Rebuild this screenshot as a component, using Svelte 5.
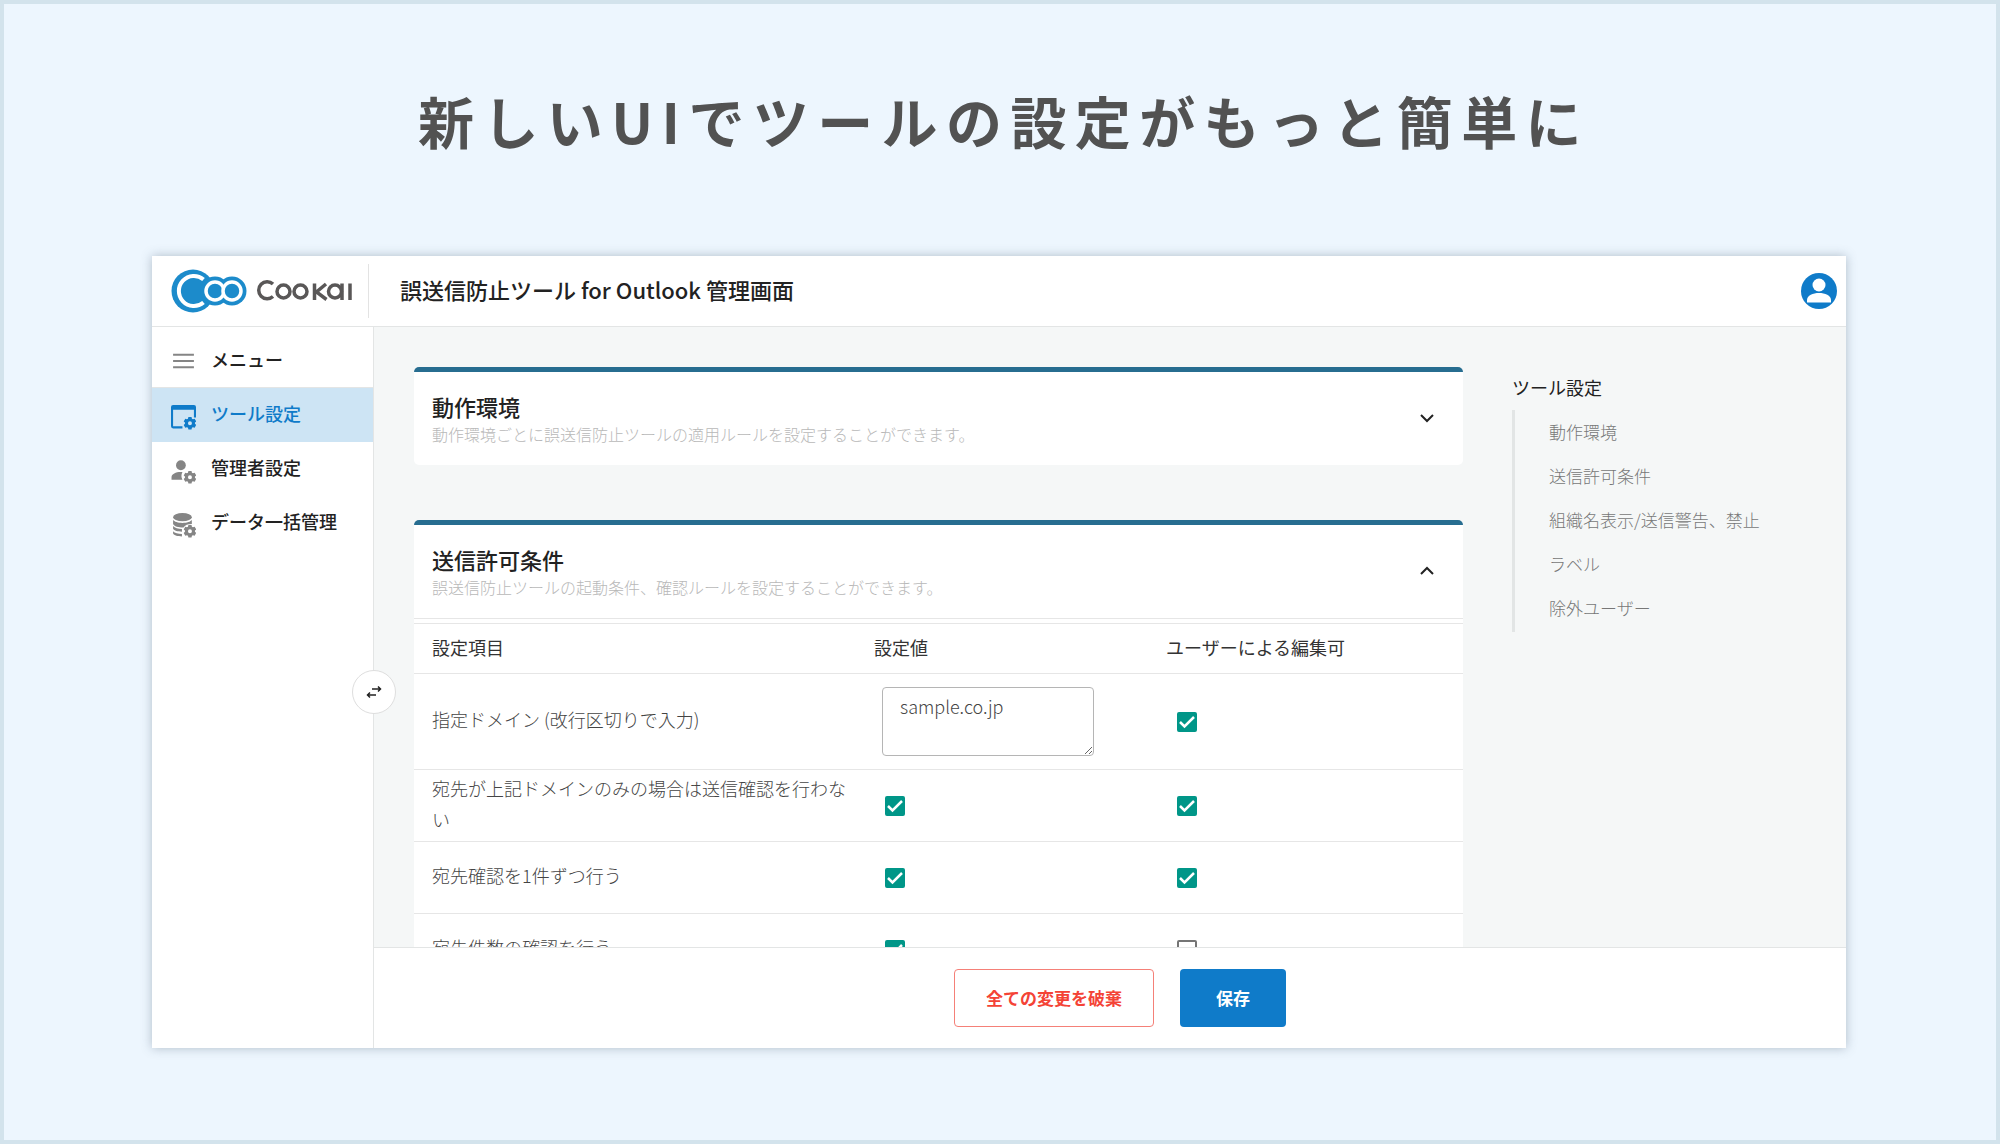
<script>
  const menu = [
    { icon: 'tool', label: 'ツール設定', active: true },
    { icon: 'admin', label: '管理者設定', active: false },
    { icon: 'data', label: 'データ一括管理', active: false }
  ];
  const toc = ['動作環境', '送信許可条件', '組織名表示/送信警告、禁止', 'ラベル', '除外ユーザー'];
  let rows = $state([
    { id: 'domain', label: '指定ドメイン (改行区切りで入力)', text: 'sample.co.jp', editable: true },
    { id: 'only', label: '宛先が上記ドメインのみの場合は送信確認を行わない', value: true, editable: true },
    { id: 'each', label: '宛先確認を1件ずつ行う', value: true, editable: true },
    { id: 'count', label: '宛先件数の確認を行う', value: true, editable: false }
  ]);
</script>

{#snippet gear()}
  <path fill-rule="evenodd" d="M16.700 11.500h3l.4 1.600 1 .6 1.600-.5 1.500 2.600-1.200 1.100v1.200l1.200 1.100-1.500 2.600-1.600-.5-1 .6-.4 1.600h-3l-.4-1.600-1-.6-1.600.5-1.500-2.600 1.200-1.100v-1.200l-1.200-1.100 1.500-2.600 1.600.5 1-.6zM18.200 15.600a1.900 1.900 0 1 0 0 3.800 1.900 1.900 0 0 0 0-3.800z" />
{/snippet}

{#snippet check(id, label, row, key)}
  <label class="check" for={id}>
    <input {id} type="checkbox" aria-label={label} bind:checked={row[key]} />
    <svg viewBox="0 0 20 20" aria-hidden="true"><path d="M3 10l4.500 4.500L17 5" /></svg>
  </label>
{/snippet}

<div class="page">
  <h1>新しいUIでツールの設定がもっと簡単に</h1>

  <div class="window">
    <header>
      <a class="logo" href="#top" aria-label="Cookai">
        <svg viewBox="0 0 184 44" role="img" aria-hidden="true">
          <g fill="#1c8bcb">
            <circle cx="22" cy="22" r="21.500" />
            <circle cx="44" cy="22" r="14.500" />
            <circle cx="61" cy="22" r="14.500" />
          </g>
          <path d="M32.500 10.500A15 15 0 1 0 32.500 33.500" fill="none" stroke="#fff" stroke-width="4" />
          <g fill="#1c8bcb" stroke="#fff" stroke-width="3.500">
            <circle cx="44" cy="22" r="9" />
            <circle cx="61" cy="22" r="9" />
          </g>
          <g fill="none" stroke="#595757" stroke-width="3.500">
            <path d="M102 15A8.500 8.500 0 1 0 102 27.500" />
            <circle cx="112.500" cy="22.500" r="6.500" />
            <circle cx="129.500" cy="22.500" r="6.500" />
            <path d="M143.500 14.500v16.500M155 15l-9.500 8 10 7.500" />
            <circle cx="164" cy="22.500" r="6.500" />
            <path d="M171 14.500v16.500M179 14.500v16.500" />
          </g>
        </svg>
      </a>
      <h2>誤送信防止ツール for Outlook 管理画面</h2>
      <button class="avatar" aria-label="アカウント">
        <svg viewBox="0 0 36 36" aria-hidden="true">
          <circle cx="18" cy="18" r="18" fill="#0f7bc9" />
          <circle cx="18" cy="12" r="6.500" fill="#fff" />
          <path d="M6 29.500v-2.500c0-4.500 6-7 12-7s12 2.500 12 7v2.500z" fill="#fff" />
        </svg>
      </button>
    </header>

    <div class="body">
      <aside>
        <button class="item menu">
          <svg viewBox="0 0 24 24" aria-hidden="true"><path d="M2 5.500h20M2 11.500h20M2 17.500h20" fill="none" stroke="#858585" stroke-width="2" /></svg>
          <span>メニュー</span>
        </button>
        <nav>
          {#each menu as m}
            <a class="item" class:active={m.active} href={'#' + m.icon}>
              <svg viewBox="0 0 24 24" aria-hidden="true">
                {#if m.icon === 'tool'}
                  <path fill-rule="evenodd" d="M2 0h20a2 2 0 0 1 2 2v10h-2V4.500H2v16h9v2H2a2 2 0 0 1-2-2V2a2 2 0 0 1 2-2z" />
                {:else if m.icon === 'admin'}
                  <circle cx="9.500" cy="6" r="4.700" />
                  <path d="M11 12.500a8 8 0 0 0 0 7.500H.5v-2.500c0-3.500 5-5.500 10.500-5z" />
                {:else}
                  <ellipse cx="11" cy="4" rx="9" ry="4" />
                  <path d="M2 6.500c2 4 16 4 18 0v4c-4 0-6.500 1-8 3.500-5-.1-9-1.200-10-3.500zM2 12.500c1.500 2 5 2.800 8.500 2.900v2.600c-4 0-7.500-1-8.500-2.800zM2 17.500c1.500 1.800 5 2.600 8.500 2.700v2.300c-4 0-7.500-.8-8.500-2.700z" />
                {/if}
                {@render gear()}
              </svg>
              <span>{m.label}</span>
            </a>
          {/each}
        </nav>
        <button class="toggle" aria-label="メニューの開閉">
          <svg viewBox="0 0 16 16" aria-hidden="true"><path d="M6 5h9M12 2.500L14.500 5 12 7.500M10 11H1M4 8.500L1.500 11 4 13.500" /></svg>
        </button>
      </aside>

      <div class="content">
        <main>
          <div class="cards">
            <section class="card">
              <div class="head">
                <div>
                  <h3>動作環境</h3>
                  <p>動作環境ごとに誤送信防止ツールの適用ルールを設定することができます。</p>
                </div>
                <button class="chevron" aria-label="動作環境を開く">
                  <svg viewBox="0 0 16 16" aria-hidden="true"><path d="M2 5l6 6 6-6" /></svg>
                </button>
              </div>
            </section>

            <section class="card">
              <div class="head open">
                <div>
                  <h3>送信許可条件</h3>
                  <p>誤送信防止ツールの起動条件、確認ルールを設定することができます。</p>
                </div>
                <button class="chevron" aria-label="送信許可条件を閉じる">
                  <svg viewBox="0 0 16 16" aria-hidden="true"><path d="M2 11l6-6 6 6" /></svg>
                </button>
              </div>
              <table>
                <thead>
                  <tr><th class="name">設定項目</th><th class="value">設定値</th><th>ユーザーによる編集可</th></tr>
                </thead>
                <tbody>
                  {#each rows as row}
                    <tr class:tall={row.text !== undefined}>
                      <td>{row.label}</td>
                      <td>
                        {#if row.text !== undefined}
                          <textarea aria-label={row.label} bind:value={row.text}></textarea>
                        {:else}
                          {@render check(row.id + '-value', row.label, row, 'value')}
                        {/if}
                      </td>
                      <td>{@render check(row.id + '-edit', row.label + ' 編集可', row, 'editable')}</td>
                    </tr>
                  {/each}
                </tbody>
              </table>
            </section>
          </div>

          <nav class="toc" aria-label="目次">
            <a class="toc-title" href="#tool">ツール設定</a>
            <ul>
              {#each toc as t}
                <li><a href={'#' + t}>{t}</a></li>
              {/each}
            </ul>
          </nav>
        </main>

        <footer>
          <button class="discard">全ての変更を破棄</button>
          <button class="save">保存</button>
        </footer>
      </div>
    </div>
  </div>
</div>

<style>
  :global(body) {
    margin: 0;
    font-family: "Noto Sans CJK JP", "Noto Sans", sans-serif;
    color: #222;
  }
  * { box-sizing: border-box; }
  button { font-family: inherit; cursor: pointer; padding: 0; border: 0; background: none; }
  a { color: inherit; text-decoration: none; }
  h1, h2, h3, p, ul { margin: 0; padding: 0; }
  svg { display: block; flex: none; }

  .page {
    height: 100vh;
    display: flex;
    flex-direction: column;
    border: 4px solid #d3e3ec;
    background: #edf6fe;
    padding: 0 150px 92px 148px;
  }
  h1 {
    flex: none;
    padding: 74px 0 94px 10px;
    font-size: 56px;
    line-height: 84px;
    font-weight: 700;
    letter-spacing: 0.15em;
    text-align: center;
    color: #525252;
  }
  .window {
    flex: 1;
    min-height: 0;
    display: flex;
    flex-direction: column;
    background: #fff;
    box-shadow: 0 0 10px rgba(60, 80, 100, 0.35);
  }
  header {
    flex: none;
    height: 71px;
    display: flex;
    align-items: center;
    border-bottom: 1px solid #e3e5e5;
    padding-right: 9px;
  }
  .logo {
    width: 217px;
    height: 54px;
    display: flex;
    align-items: center;
    padding-left: 19px;
    border-right: 1px solid #e3e3e3;
  }
  .logo svg { width: 184px; height: 44px; }
  h2 {
    flex: 1;
    padding: 0 0 4px 31px;
    font-size: 22px;
    line-height: 32px;
    font-weight: 500;
  }
  .avatar svg { width: 36px; height: 36px; }

  .body { flex: 1; min-height: 0; display: flex; }
  aside {
    position: relative;
    flex: none;
    width: 222px;
    border-right: 1px solid #e3e5e5;
  }
  .item {
    display: flex;
    align-items: center;
    gap: 15px;
    width: 100%;
    height: 54px;
    padding-left: 19px;
    font-size: 18px;
    line-height: 26px;
    font-weight: 500;
    color: #222;
  }
  .item span { padding-bottom: 4px; }
  .item svg { width: 25px; height: 25px; margin-top: 4px; fill: #858585; }
  .item.menu {
    height: 61px;
    padding-top: 8px;
    border-bottom: 1px solid #e3e5e5;
  }
  .item.menu svg { margin-top: 0; }
  .item.active { background: #cde4f4; color: #0f7bc9; }
  .item.active svg { fill: #0f7bc9; }
  .toggle {
    position: absolute;
    right: -23px;
    top: 343px;
    width: 44px;
    height: 44px;
    display: grid;
    place-items: center;
    border: 1px solid #dedede;
    border-radius: 50%;
    background: #fff;
  }
  .toggle svg { width: 16px; height: 16px; fill: none; stroke: #222; stroke-width: 1.5; }

  .content { flex: 1; min-width: 0; display: flex; flex-direction: column; }
  main {
    flex: 1;
    min-height: 0;
    overflow: hidden;
    display: flex;
    gap: 49px;
    padding: 40px 40px 0;
    background: #f5f7f7;
  }
  .cards { flex: 1; min-width: 0; }
  .card {
    margin-bottom: 55px;
    border-top: 5px solid #276d90;
    border-radius: 5px;
    background: #fff;
  }
  .head {
    display: flex;
    align-items: center;
    justify-content: space-between;
    height: 93px;
    padding: 0 28px 2px 18px;
  }
  .head.open { height: 94px; border-bottom: 1px solid #e6e6e6; margin-bottom: 4px; }
  h3 { font-size: 22px; line-height: 32px; font-weight: 500; }
  p { font-size: 16px; line-height: 24px; font-weight: 300; color: #b8b8b8; }
  .chevron svg { width: 16px; height: 16px; fill: none; stroke: #222; stroke-width: 2; }

  table { width: 100%; table-layout: fixed; border-collapse: collapse; font-size: 18px; line-height: 31px; }
  th, td { padding: 0 18px; text-align: left; border-top: 1px solid #e6e6e6; }
  th { height: 50px; padding-bottom: 3px; font-weight: 400; color: #333; }
  td { height: 72px; font-weight: 300; color: #444; }
  td:first-child { padding-right: 8px; padding-bottom: 4px; }
  td:not(:first-child) { padding-left: 29px; }
  tr.tall td { height: 96px; }
  tr.tall td:nth-child(2) { padding-left: 26px; padding-right: 0; }
  th.name { width: 442px; }
  th.value { width: 292px; }
  textarea {
    display: block;
    width: 212px;
    height: 69px;
    padding: 5px 17px;
    border: 1px solid #b5b5b5;
    border-radius: 4px;
    font-family: inherit;
    font-size: 18px;
    line-height: 26px;
    font-weight: 300;
    color: #444;
    resize: both;
  }
  .check { position: relative; display: block; width: 20px; height: 20px; }
  .check input {
    appearance: none;
    display: block;
    width: 20px;
    height: 20px;
    margin: 0;
    border: 2px solid #757575;
    border-radius: 2px;
    background: #fff;
  }
  .check input:checked { border-color: #009688; background: #009688; }
  .check svg {
    position: absolute;
    inset: 0;
    fill: none;
    stroke: #fff;
    stroke-width: 2.5;
    pointer-events: none;
  }

  .toc { flex: none; width: 294px; padding-top: 6px; }
  .toc-title { display: block; font-size: 18px; line-height: 28px; padding-bottom: 9px; }
  ul { list-style: none; padding: 0 0 2px; border-left: 3px solid #e2e5e5; }
  li { padding-left: 34px; font-size: 17px; line-height: 44px; font-weight: 300; color: #777; }

  footer {
    flex: none;
    height: 101px;
    display: flex;
    align-items: center;
    justify-content: center;
    gap: 26px;
    padding-left: 20px;
    border-top: 1px solid #e3e5e5;
    background: #fff;
  }
  footer button { height: 58px; border-radius: 4px; font-size: 17px; line-height: 24px; font-weight: 700; }
  .discard { padding: 0 31px; border: 1px solid #f58078; color: #f44336; }
  .save { padding: 0 36px; background: #0f7bc9; color: #fff; }
</style>
